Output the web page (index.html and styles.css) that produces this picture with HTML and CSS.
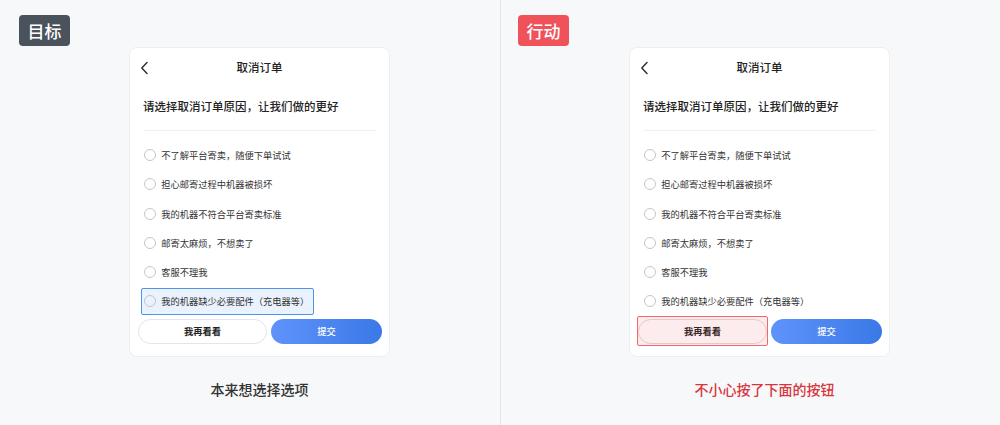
FILE: index.html
```html
<!DOCTYPE html>
<html lang="zh-CN">
<head>
<meta charset="utf-8">
<link rel="stylesheet" href="styles.css">
</head>
<body>
<section class="panel panel--target">
  <div class="badge badge--dark">目标</div>
  <div class="stage stage--target">
    <div class="card">
      <div class="card-head">
        <svg class="back" width="9" height="14" viewBox="0 0 9 14"><polyline points="7,1.5 1.8,7 7,12.5" fill="none" stroke="#333" stroke-width="1.5" stroke-linecap="round" stroke-linejoin="round"/></svg>
        <span class="card-title">取消订单</span>
        <span></span>
      </div>
      <div class="question">请选择取消订单原因，让我们做的更好</div>
      <ul class="options">
        <li class="option"><span class="opt"><i class="radio"></i>不了解平台寄卖，随便下单试试</span></li>
        <li class="option"><span class="opt"><i class="radio"></i>担心邮寄过程中机器被损坏</span></li>
        <li class="option"><span class="opt"><i class="radio"></i>我的机器不符合平台寄卖标准</span></li>
        <li class="option"><span class="opt"><i class="radio"></i>邮寄太麻烦，不想卖了</span></li>
        <li class="option"><span class="opt"><i class="radio"></i>客服不理我</span></li>
        <li class="option"><span class="opt opt--focus"><i class="radio"></i>我的机器缺少必要配件（充电器等）</span></li>
      </ul>
      <div class="actions">
        <button class="btn btn--ghost">我再看看</button>
        <button class="btn btn--primary">提交</button>
      </div>
    </div>
    <p class="caption">本来想选择选项</p>
  </div>
</section>
<section class="panel panel--action">
  <div class="badge badge--red">行动</div>
  <div class="stage stage--action">
    <div class="card">
      <div class="card-head">
        <svg class="back" width="9" height="14" viewBox="0 0 9 14"><polyline points="7,1.5 1.8,7 7,12.5" fill="none" stroke="#333" stroke-width="1.5" stroke-linecap="round" stroke-linejoin="round"/></svg>
        <span class="card-title">取消订单</span>
        <span></span>
      </div>
      <div class="question">请选择取消订单原因，让我们做的更好</div>
      <ul class="options">
        <li class="option"><span class="opt"><i class="radio"></i>不了解平台寄卖，随便下单试试</span></li>
        <li class="option"><span class="opt"><i class="radio"></i>担心邮寄过程中机器被损坏</span></li>
        <li class="option"><span class="opt"><i class="radio"></i>我的机器不符合平台寄卖标准</span></li>
        <li class="option"><span class="opt"><i class="radio"></i>邮寄太麻烦，不想卖了</span></li>
        <li class="option"><span class="opt"><i class="radio"></i>客服不理我</span></li>
        <li class="option"><span class="opt"><i class="radio"></i>我的机器缺少必要配件（充电器等）</span></li>
      </ul>
      <div class="actions">
        <button class="btn btn--ghost btn--hit">我再看看</button>
        <button class="btn btn--primary">提交</button>
      </div>
    </div>
    <p class="caption caption--red">不小心按了下面的按钮</p>
  </div>
</section>
</body>
</html>
```

FILE: styles.css
```css
* { box-sizing: border-box; }
html, body { margin: 0; padding: 0; }
body {
  width: 1000px;
  height: 425px;
  overflow: hidden;
  background: #f7f8fa;
  display: flex;
  font-family: "Noto Sans CJK SC", "Noto Sans", sans-serif;
  color: #222;
}
.panel {
  width: 500px;
  height: 425px;
  padding-top: 15px;
  flex: none;
}
.panel--target { padding-left: 19px; }
.panel--action { border-left: 1px solid #e4e6ea; padding-left: 17px; }

.badge {
  display: inline-flex;
  align-items: center;
  justify-content: center;
  width: 51px;
  height: 31px;
  border-radius: 4px;
  color: #fff;
  font-size: 17px;
  font-weight: 500;
  line-height: 1;
  vertical-align: top;
}
.badge--dark { background: #4a525c; }
.badge--red { background: #f0525a; }

.stage { width: 261px; margin-top: 1px; }
.stage--target { margin-left: 110px; }
.stage--action { margin-left: 111px; }

.card {
  width: 261px;
  background: #fff;
  border: 1px solid #eceef1;
  border-radius: 8px;
  padding: 0 13px 12px 13px;
}
.card-head {
  height: 39px;
  display: grid;
  grid-template-columns: 20px 1fr 20px;
  align-items: center;
}
.back { display: block; margin-left: -3px; }
.card-title {
  text-align: center;
  font-size: 11.5px;
  font-weight: 500;
  color: #222;
  line-height: 1;
}
.question {
  padding: 10px 0 15px;
  line-height: 18px;
  font-size: 11.5px;
  font-weight: 500;
  color: #222;
  border-bottom: 1px solid #f0f1f3;
}
.options {
  list-style: none;
  margin: 0;
  padding: 9.3px 0 0;
}
.option {
  height: 29.3px;
  display: flex;
  align-items: center;
}
.opt {
  display: inline-flex;
  align-items: center;
  height: 27px;
  margin-left: -2.3px;
  padding: 0 3.5px 0 2.5px;
  border: 1.5px solid transparent;
  border-radius: 2px;
  font-size: 9.25px;
  color: #333;
  white-space: nowrap;
}
.opt--focus {
  border-color: #4d95ea;
  background: #e9f2fd;
}
.radio {
  display: inline-block;
  width: 12px;
  height: 12px;
  border: 1.2px solid #c3c6cb;
  border-radius: 50%;
  margin-right: 5px;
  background: #fff;
  flex: none;
}
.opt--focus .radio { background: transparent; }

.actions {
  display: flex;
  gap: 4px;
  margin: 3px -6px 0 -5px;
}
.btn {
  height: 25px;
  border-radius: 13px;
  font-family: inherit;
  font-size: 9.3px;
  line-height: 1;
  padding: 0;
  cursor: pointer;
}
.btn--ghost {
  width: 129px;
  background: #fff;
  border: 1px solid #e3e5e9;
  color: #222;
  font-weight: 700;
}
.btn--primary {
  width: 111px;
  border: none;
  color: #fff;
  font-weight: 500;
  background: linear-gradient(90deg, #5f93fb 0%, #3a79e7 100%);
}
.btn--hit {
  position: relative;
  border-color: #efd3d5;
}
.btn--hit::after {
  content: "";
  position: absolute;
  top: -4px;
  bottom: -3px;
  left: -2px;
  right: -2px;
  border: 1.5px solid #f0696b;
  border-radius: 2px;
  background: rgba(240, 82, 90, 0.11);
}

.caption {
  margin: 22px 0 0;
  line-height: 20px;
  font-size: 14px;
  font-weight: 500;
  color: #333;
  text-align: center;
}
.caption--red {
  color: #d8363d;
  padding-left: 10px;
}
```
